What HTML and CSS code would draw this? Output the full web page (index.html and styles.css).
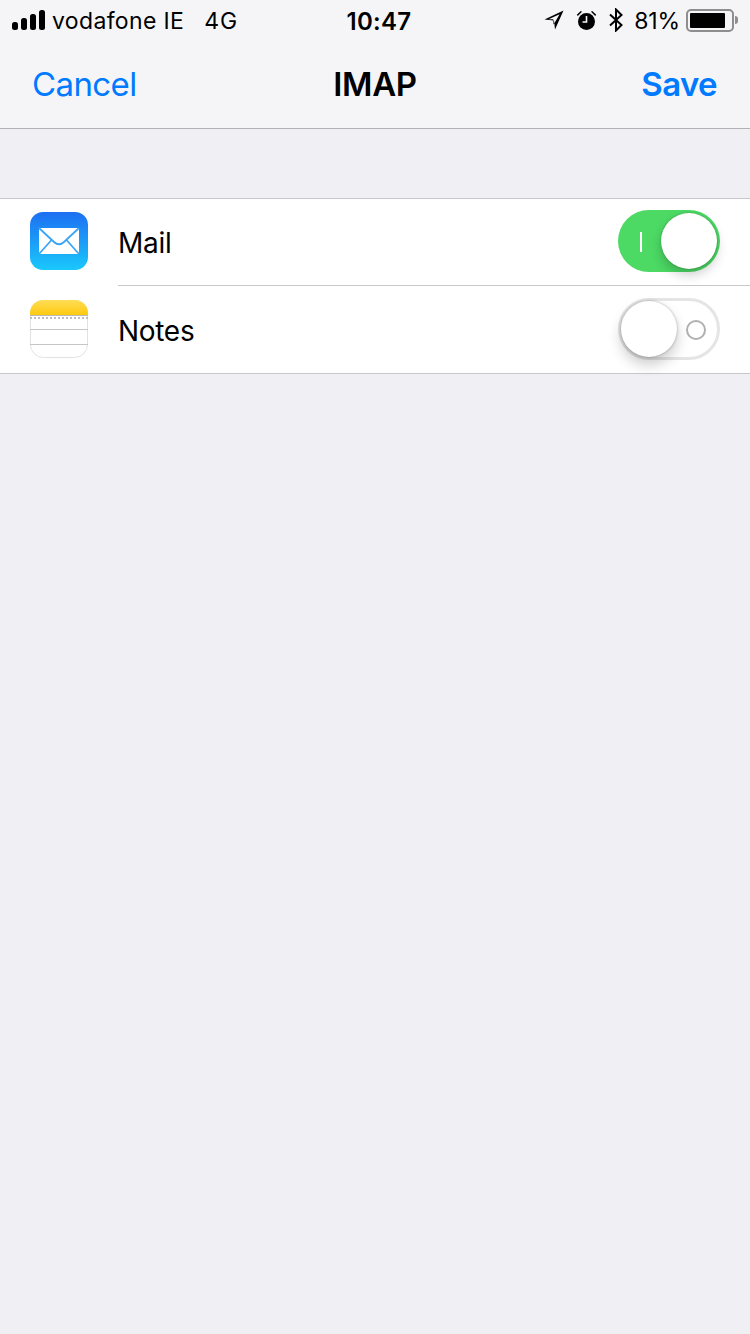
FILE: index.html
```html
<!DOCTYPE html>
<html>
<head>
  <title>IMAP</title>
  <link rel="stylesheet" href="styles.css">
</head>
<body>
  <div class="header">
    <div class="statusBar">
      <div class="statusLeft">
        <svg class="signal" width="34" height="20" viewBox="0 0 34 20">
          <rect x="0" y="12" width="6" height="8" rx="2.5"/>
          <rect x="9" y="8" width="6" height="12" rx="2.5"/>
          <rect x="18" y="4" width="6" height="16" rx="2.5"/>
          <rect x="27" y="0" width="6" height="20" rx="2.5"/>
        </svg>
        <span class="carrier">vodafone IE</span>
        <span class="network">4G</span>
      </div>
      <div class="clock">10:47</div>
      <div class="statusRight">
        <svg class="locationIcon" width="20" height="20" viewBox="0 0 20 20">
          <path d="M19.5 0.5 L0.5 9.5 L10 10.5 L11 19.5 Z M15.6 4.2 L9.6 14.6 L9.2 9.3 L4.6 9.2 Z" fill-rule="evenodd"/>
        </svg>
        <svg class="alarmIcon" width="21" height="21" viewBox="0 0 21 21">
          <circle cx="10.5" cy="11.5" r="8.5"/>
          <path d="M0.8 4.8 L4.8 0.9 L6 1.8 L1.8 6 Z M20.2 4.8 L16.2 0.9 L15 1.8 L19.2 6 Z"/>
          <path d="M10.5 6 V12 H6.5" fill="none" stroke="#f5f5f8" stroke-width="1.6"/>
        </svg>
        <svg class="bluetoothIcon" width="16" height="24" viewBox="0 0 16 24">
          <path d="M2 6.5 L13.5 17 L8 22.5 V1.5 L13.5 7 L2 17.5" fill="none" stroke="#000" stroke-width="2"/>
        </svg>
        <span class="percent">81%</span>
        <div class="battery"><div class="batteryLevel"></div></div>
        <div class="batteryTip"></div>
      </div>
    </div>
    <div class="navBar">
      <div class="navCancel">Cancel</div>
      <div class="navTitle">IMAP</div>
      <div class="navSave">Save</div>
    </div>
  </div>

  <div class="list">
    <div class="row rowMail">
      <svg class="appIcon" width="58" height="58" viewBox="0 0 58 58">
        <defs>
          <linearGradient id="mailBg" x1="0" y1="0" x2="0" y2="1">
            <stop offset="0" stop-color="#1d6ff2"/>
            <stop offset="1" stop-color="#1ac8fc"/>
          </linearGradient>
        </defs>
        <rect width="58" height="58" rx="13" fill="url(#mailBg)"/>
        <path d="M9 16 H49 V42 H9 Z" fill="#fff"/>
        <path d="M9 16 L24 30 Q29 34.5 34 30 L49 16 M9 42 L21.5 28 M49 42 L36.5 28" fill="none" stroke="#3aa5f7" stroke-width="1.8"/>
      </svg>
      <div class="rowBody">
        <span class="rowLabel">Mail</span>
        <div class="toggle toggleOn">
          <div class="onMark"></div>
          <div class="thumb"></div>
        </div>
      </div>
    </div>
    <div class="separator"></div>
    <div class="row rowNotes">
      <svg class="appIcon" width="58" height="58" viewBox="0 0 58 58">
        <defs>
          <linearGradient id="notesTop" x1="0" y1="0" x2="0" y2="1">
            <stop offset="0" stop-color="#ffdd55"/>
            <stop offset="1" stop-color="#fec90f"/>
          </linearGradient>
        </defs>
        <rect x="0.5" y="0.5" width="57" height="57" rx="13" fill="#fff" stroke="#e2e2e2"/>
        <path d="M0 15 V13 A13 13 0 0 1 13 0 H45 A13 13 0 0 1 58 13 V15 Z" fill="url(#notesTop)"/>
        <rect y="15" width="58" height="1" fill="#b9b9b9"/>
        <path d="M0 18 H58" stroke="#bdbdbd" stroke-width="2" stroke-dasharray="2 2"/>
        <rect y="29" width="58" height="1" fill="#c6c6c6"/>
        <rect y="44" width="58" height="1" fill="#c6c6c6"/>
      </svg>
      <div class="rowBody">
        <span class="rowLabel">Notes</span>
        <div class="toggle toggleOff">
          <div class="offMark"></div>
          <div class="thumb"></div>
        </div>
      </div>
    </div>
  </div>
</body>
</html>
```

FILE: styles.css
```css
body {
  margin: 0;
  height: 1334px;
  overflow: hidden;
  background-color: #efeff4;
  font-family: Inter, "Liberation Sans", sans-serif;
  color: #000;
}

.header {
  height: 128px;
  background-color: #f5f5f8;
  border-bottom: 1px solid #b2b2b2;
}

.statusBar {
  height: 40px;
  display: grid;
  grid-template-columns: 1fr auto 1fr;
  align-items: center;
  padding: 0 12px;
  font-size: 23px;
}

.statusLeft {
  display: flex;
  align-items: center;
}

.carrier {
  margin-left: 6px;
  letter-spacing: 0.35px;
  padding-top: 2px;
}

.network {
  margin-left: 20px;
  letter-spacing: 1px;
  padding-top: 2px;
}

.clock {
  font-weight: 600;
  font-size: 24px;
  letter-spacing: 0.3px;
  margin-left: 8px;
  padding-top: 2px;
}

.statusRight {
  display: flex;
  align-items: center;
  justify-content: flex-end;
}

.alarmIcon {
  margin-left: 12px;
}

.bluetoothIcon {
  margin-left: 11px;
}

.percent {
  margin-left: 10px;
  letter-spacing: -0.1px;
  padding-top: 2px;
}

.battery {
  margin-left: 6px;
  width: 48px;
  height: 23px;
  box-sizing: border-box;
  border: 2px solid #8e8e8e;
  border-radius: 5px;
  padding: 2px;
}

.batteryLevel {
  width: 35px;
  height: 15px;
  background-color: #000;
  border-radius: 1px;
}

.batteryTip {
  width: 3px;
  height: 8px;
  margin-left: 1px;
  background-color: #8e8e8e;
  border-radius: 0 3px 3px 0;
}

.navBar {
  height: 88px;
  display: grid;
  grid-template-columns: 1fr auto 1fr;
  align-items: center;
  padding: 0 33px;
  font-size: 33px;
}

.navCancel {
  color: #007aff;
  font-weight: 400;
  letter-spacing: -0.6px;
  margin-left: -1px;
}

.navTitle {
  font-weight: 600;
  letter-spacing: -0.4px;
}

.navSave {
  color: #007aff;
  font-weight: 600;
  text-align: right;
  letter-spacing: -0.6px;
}

.list {
  margin-top: 69px;
  background-color: #fff;
  border-top: 1px solid #c8c7cc;
  border-bottom: 1px solid #c8c7cc;
}

.row {
  display: flex;
  align-items: center;
  padding-left: 30px;
}

.rowMail {
  height: 84px;
  padding-bottom: 2px;
}

.rowNotes {
  height: 86px;
  padding-bottom: 1px;
}

.separator {
  height: 1px;
  margin-left: 118px;
  background-color: #c8c7cc;
}

.appIcon {
  flex-shrink: 0;
}

.rowBody {
  flex: 1;
  margin-left: 30px;
  padding-right: 30px;
  display: flex;
  align-items: center;
  justify-content: space-between;
}

.rowLabel {
  font-size: 28px;
  letter-spacing: -0.3px;
  margin-top: 4px;
}

.toggle {
  position: relative;
  width: 102px;
  height: 62px;
  box-sizing: border-box;
  border-radius: 31px;
}

.toggleOn {
  background-color: #4cd964;
}

.toggleOff {
  background-color: #fff;
  border: 3px solid #e5e5e5;
}

.thumb {
  position: absolute;
  width: 56px;
  height: 56px;
  border-radius: 50%;
  background-color: #fff;
}

.toggleOn .thumb {
  top: 3px;
  right: 3px;
  box-shadow: 0 6px 12px rgba(0, 0, 0, 0.2), 0 0 2px rgba(0, 0, 0, 0.3);
}

.toggleOff .thumb {
  top: 0;
  left: 0;
  box-shadow: 0 8px 14px rgba(0, 0, 0, 0.2), 0 0 3px rgba(0, 0, 0, 0.3);
}

.onMark {
  position: absolute;
  left: 22px;
  top: 22px;
  width: 2px;
  height: 20px;
  background-color: #fff;
}

.offMark {
  position: absolute;
  left: 65px;
  top: 19px;
  width: 20px;
  height: 20px;
  box-sizing: border-box;
  border: 2px solid #b0b0b0;
  border-radius: 50%;
}
```
